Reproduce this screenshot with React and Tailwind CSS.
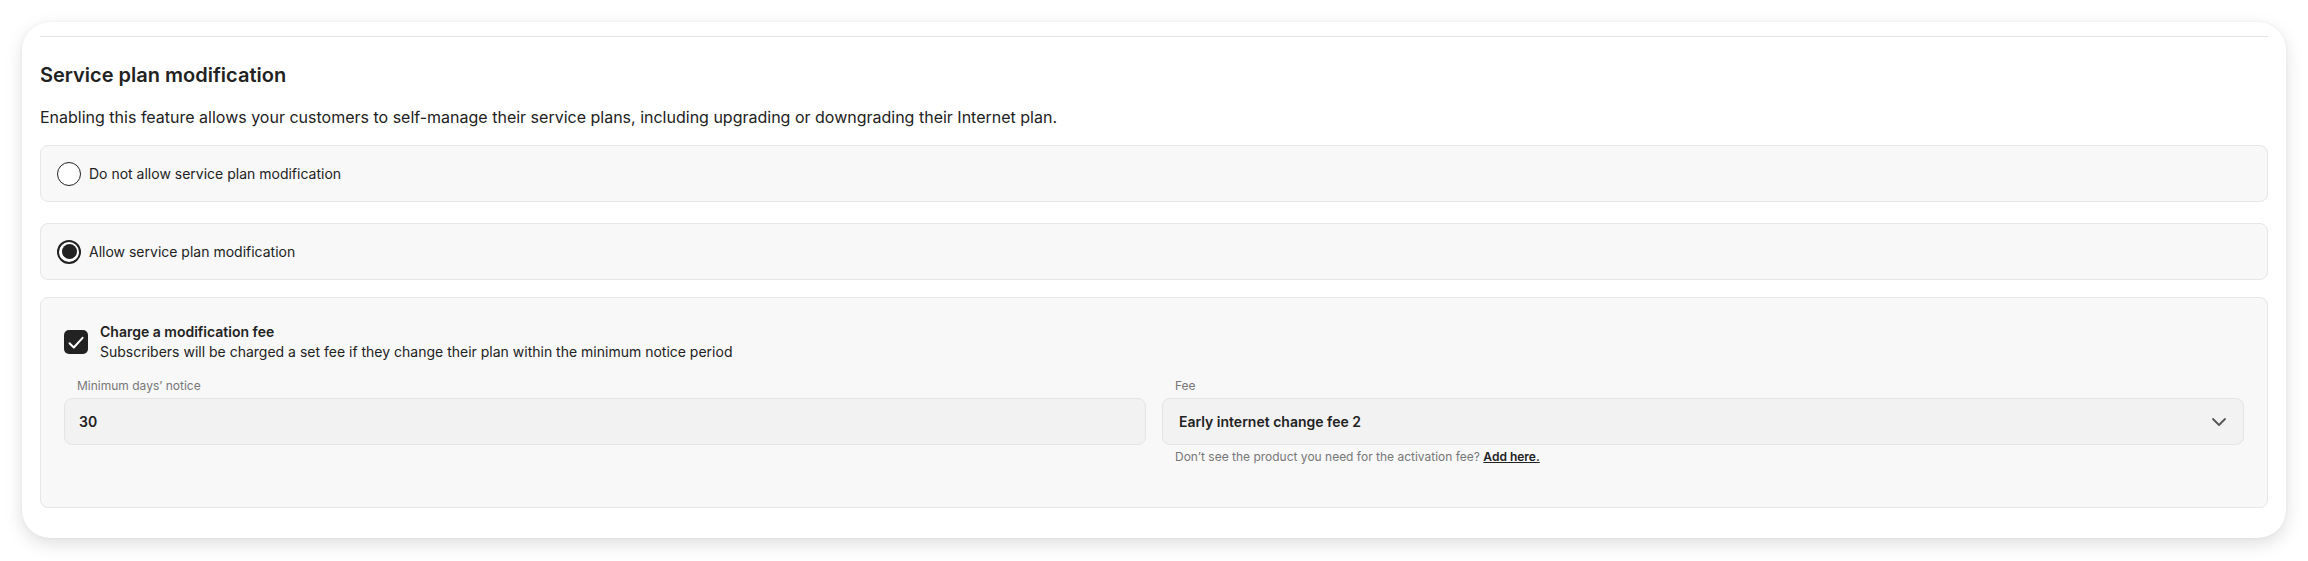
import React from "react";
import { ChevronDown } from "lucide-react";

function Radio({ checked }) {
  if (checked) {
    return (
      <span className="flex h-6 w-6 shrink-0 items-center justify-center rounded-full border-2 border-[#222222] bg-white">
        <span className="h-[15px] w-[15px] rounded-full bg-[#222222]" />
      </span>
    );
  }
  return <span className="h-6 w-6 shrink-0 rounded-full border-[1.5px] border-[#222222] bg-white" />;
}

export default function App() {
  return (
    <div className="min-h-[561px] bg-white px-[22px] pt-[22px] font-['Inter',sans-serif] text-[#222222]">
      <div className="rounded-[28px] bg-white px-[18px] pt-[14px] pb-[30px] shadow-[0_6px_18px_rgba(0,0,0,0.13),0_0_3px_rgba(0,0,0,0.05)]">
        <div className="border-t border-[#e2e2e2]" />
        <h2 className="mt-6 text-[20px] leading-7 font-semibold">Service plan modification</h2>
        <p className="mt-4 text-[16px] leading-6">
          Enabling this feature allows your customers to self-manage their service plans, including upgrading or downgrading their Internet plan.
        </p>

        <div className="mt-4 flex h-[57px] items-center gap-2 rounded-lg border border-[#e6e6e6] bg-[#f8f8f8] px-4">
          <Radio checked={false} />
          <span className="text-[14px] leading-5">Do not allow service plan modification</span>
        </div>

        <div className="mt-[21px] flex h-[57px] items-center gap-2 rounded-lg border border-[#e6e6e6] bg-[#f8f8f8] px-4">
          <Radio checked={true} />
          <span className="text-[14px] leading-5">Allow service plan modification</span>
        </div>

        <div className="mt-[17px] rounded-lg border border-[#e6e6e6] bg-[#f8f8f8] px-[23px] pt-6 pb-[42px]">
          <div className="flex items-center gap-3">
            <span className="flex h-6 w-6 shrink-0 items-center justify-center rounded-[5px] bg-[#222222]">
              <svg width="24" height="24" viewBox="0 0 24 24" fill="none">
                <path d="M5.5 13.2l4.3 4.3L18.6 7.8" stroke="white" strokeWidth="2" strokeLinecap="round" strokeLinejoin="round" />
              </svg>
            </span>
            <div className="text-[14px] leading-5">
              <div className="font-semibold">Charge a modification fee</div>
              <div>Subscribers will be charged a set fee if they change their plan within the minimum notice period</div>
            </div>
          </div>

          <div className="mt-4 grid grid-cols-2 gap-4">
            <div>
              <label className="block pl-[13px] text-[12px] leading-4 text-[#777777]">Minimum days’ notice</label>
              <div className="mt-1 flex h-[47px] items-center rounded-lg border border-[#e4e4e4] bg-[#f2f2f2] px-[14px] text-[14px] font-semibold">
                30
              </div>
            </div>
            <div>
              <label className="block pl-[13px] text-[12px] leading-4 text-[#777777]">Fee</label>
              <div className="mt-1 flex h-[47px] items-center justify-between rounded-lg border border-[#e4e4e4] bg-[#f2f2f2] pr-[12px] pl-4 text-[14px] font-semibold">
                <span>Early internet change fee 2</span>
                <ChevronDown size={24} strokeWidth={1.8} className="text-[#555555]" />
              </div>
              <p className="mt-1 pl-[13px] text-[12px] leading-4 text-[#777777]">
                Don’t see the product you need for the activation fee?{" "}
                <a className="font-semibold text-[#222222] underline">Add here.</a>
              </p>
            </div>
          </div>
        </div>
      </div>
    </div>
  );
}
